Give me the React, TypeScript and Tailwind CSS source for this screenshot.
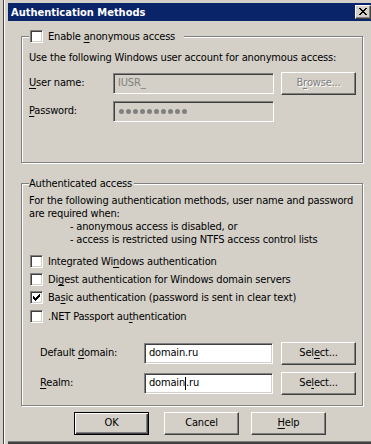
import React from "react";

const U = ({ children }: { children: React.ReactNode }) => (
  <span className="underline underline-offset-[2px] decoration-[1px]">{children}</span>
);

function Btn({
  children,
  def,
  disabled,
  className = "",
}: {
  children: React.ReactNode;
  def?: boolean;
  disabled?: boolean;
  className?: string;
}) {
  const frame = def
    ? "border border-black shadow-[inset_1px_1px_0_#fff,inset_-1px_-1px_0_#404040,inset_-2px_-2px_0_#808080]"
    : "border border-t-white border-l-white border-r-[#404040] border-b-[#404040] shadow-[inset_-1px_-1px_0_#808080]";
  return (
    <div
      className={`h-[23px] w-[75px] shrink-0 flex items-center justify-center bg-[#d4d0c8] ${frame} ${
        disabled ? "text-[#808080] [text-shadow:1px_1px_0_#fff]" : "text-black"
      } ${className}`}
    >
      {children}
    </div>
  );
}

const sunken =
  "border border-t-[#808080] border-l-[#808080] border-r-white border-b-white shadow-[inset_1px_1px_0_#404040,inset_-1px_-1px_0_#d4d0c8]";

function Check({ checked }: { checked?: boolean }) {
  return (
    <div className={`w-[13px] h-[13px] shrink-0 bg-white flex items-center justify-center ${sunken}`}>
      {checked && (
        <svg width="7" height="7" viewBox="0 0 7 7" shapeRendering="crispEdges">
          <path
            fill="#000"
            d="M6 0h1v1h-1z M5 1h2v1h-2z M0 2h1v1h-1z M4 2h3v1h-3z M0 3h2v1h-2z M3 3h3v1h-3z M0 4h5v1h-5z M1 5h3v1h-3z M2 6h1v1h-1z"
          />
        </svg>
      )}
    </div>
  );
}

function CheckRow({ checked, children, className = "" }: { checked?: boolean; children: React.ReactNode; className?: string }) {
  return (
    <div className={`flex items-center h-[13px] pl-[1px] ${className}`}>
      <Check checked={checked} />
      <span className="ml-[5px] leading-[13px]">{children}</span>
    </div>
  );
}

const fieldset =
  "w-[342px] border border-[#808080] shadow-[inset_1px_1px_0_#fff,1px_1px_0_#fff] pl-[7px] pr-0 m-0 min-w-0";

export default function App() {
  return (
    <div className="w-[371px] h-[444px] overflow-hidden bg-[#d4d0c8] flex font-['DejaVu_Sans_Condensed','DejaVu_Sans',sans-serif] text-[11px] tracking-[-0.17px] whitespace-nowrap text-black select-none">
      <div className="w-[3px] shrink-0 bg-[#d4d0c8]" />
      <div className="w-[1px] shrink-0 bg-[#404040]" />
      {/* window */}
      <div className="w-[380px] shrink-0 flex flex-col border-l border-l-white pl-[3px] pt-[3px]">
        {/* title bar */}
        <div className="h-[18px] w-[363px] bg-[#0a246a] flex items-center justify-between pl-[3px]">
          <span className="text-white font-bold text-[11px] leading-[13px] tracking-normal">Authentication Methods</span>
          <div className="w-[16px] h-[14px] bg-[#d4d0c8] border border-t-white border-l-white border-r-[#404040] border-b-[#404040] shadow-[inset_-1px_-1px_0_#808080] flex items-center justify-center">
            <svg width="8" height="7" viewBox="0 0 8 7" shapeRendering="crispEdges" className="-mt-[1px] -ml-[1px]">
              <path
                fill="#000"
                d="M0 0h2v1h-2z M6 0h2v1h-2z M1 1h2v1h-2z M5 1h2v1h-2z M2 2h4v1h-4z M3 3h2v1h-2z M2 4h4v1h-4z M1 5h2v1h-2z M5 5h2v1h-2z M0 6h2v1h-2z M6 6h2v1h-2z"
              />
            </svg>
          </div>
        </div>
        {/* body */}
        <div className="h-[420px] flex flex-col pl-[13px] pt-[9px]">
          {/* group 1 */}
          <fieldset className={`${fieldset} pt-[8px] pb-[40px]`}>
            <legend className="flex items-center h-[13px] pl-[1px] pr-[9px] bg-[#d4d0c8]">
              <Check />
              <span className="ml-[5px] leading-[13px]">
                Enable <U>a</U>nonymous access
              </span>
            </legend>
            <div className="h-[13px] leading-[13px]">Use the following Windows user account for anonymous access:</div>
            <div className="mt-[8px] flex items-center h-[23px]">
              <div className="w-[84px] shrink-0">
                <U>U</U>ser name:
              </div>
              <div className={`w-[161px] h-[21px] shrink-0 bg-[#d4d0c8] text-[#808080] pl-[4px] flex items-center ${sunken}`}>
                IUSR_
              </div>
              <Btn disabled className="ml-[7px]">
                B<U>r</U>owse...
              </Btn>
            </div>
            <div className="mt-[6px] flex items-center h-[21px]">
              <div className="w-[84px] shrink-0">
                <U>P</U>assword:
              </div>
              <div className={`w-[161px] h-[21px] shrink-0 bg-[#d4d0c8] pl-[5px] flex items-center gap-[2px] ${sunken}`}>
                {Array.from({ length: 10 }).map((_, i) => (
                  <span key={i} className="w-[5px] h-[5px] rounded-full bg-[#808080]" />
                ))}
              </div>
            </div>
          </fieldset>

          {/* group 2 */}
          <fieldset className={`${fieldset} mt-[14px] pt-[4px] pb-[10px]`}>
            <legend className="h-[13px] leading-[13px] pr-[2px] bg-[#d4d0c8]">Authenticated access</legend>
            <div className="leading-[13px]">
              <div>For the following authentication methods, user name and password</div>
              <div>are required when:</div>
              <div className="pl-[41px]">- anonymous access is disabled, or</div>
              <div className="pl-[41px]">- access is restricted using NTFS access control lists</div>
            </div>
            <CheckRow className="mt-[9px]">
              Integrated Wi<U>n</U>dows authentication
            </CheckRow>
            <CheckRow className="mt-[5px]">
              Di<U>g</U>est authentication for Windows domain servers
            </CheckRow>
            <CheckRow checked className="mt-[5px]">
              Ba<U>s</U>ic authentication (password is sent in clear text)
            </CheckRow>
            <CheckRow className="mt-[6px]">
              .NET Passport au<U>t</U>hentication
            </CheckRow>
            <div className="mt-[19px] flex items-center h-[23px] pl-[11px]">
              <div className="w-[104px] shrink-0">
                Default <U>d</U>omain:
              </div>
              <div className={`w-[129px] h-[21px] shrink-0 bg-white pl-[4px] flex items-center ${sunken}`}>domain.ru</div>
              <Btn className="ml-[8px]">
                Sel<U>e</U>ct...
              </Btn>
            </div>
            <div className="mt-[7px] flex items-center h-[23px] pl-[11px]">
              <div className="w-[104px] shrink-0">
                <U>R</U>ealm:
              </div>
              <div className={`w-[129px] h-[21px] shrink-0 bg-white pl-[4px] flex items-center ${sunken}`}>
                domain<span className="inline-block w-[1px] h-[13px] bg-black" />.ru
              </div>
              <Btn className="ml-[8px]">
                Se<U>l</U>ect...
              </Btn>
            </div>
          </fieldset>

          {/* buttons */}
          <div className="mt-[6px] flex">
            <Btn def className="ml-[53px]">
              OK
            </Btn>
            <Btn className="ml-[15px]">Cancel</Btn>
            <Btn className="ml-[12px]">
              <U>H</U>elp
            </Btn>
          </div>
        </div>
        <div className="h-[1px] w-[380px] bg-[#808080]" />
        <div className="h-[2px] w-[380px] bg-[#404040]" />
      </div>
    </div>
  );
}
